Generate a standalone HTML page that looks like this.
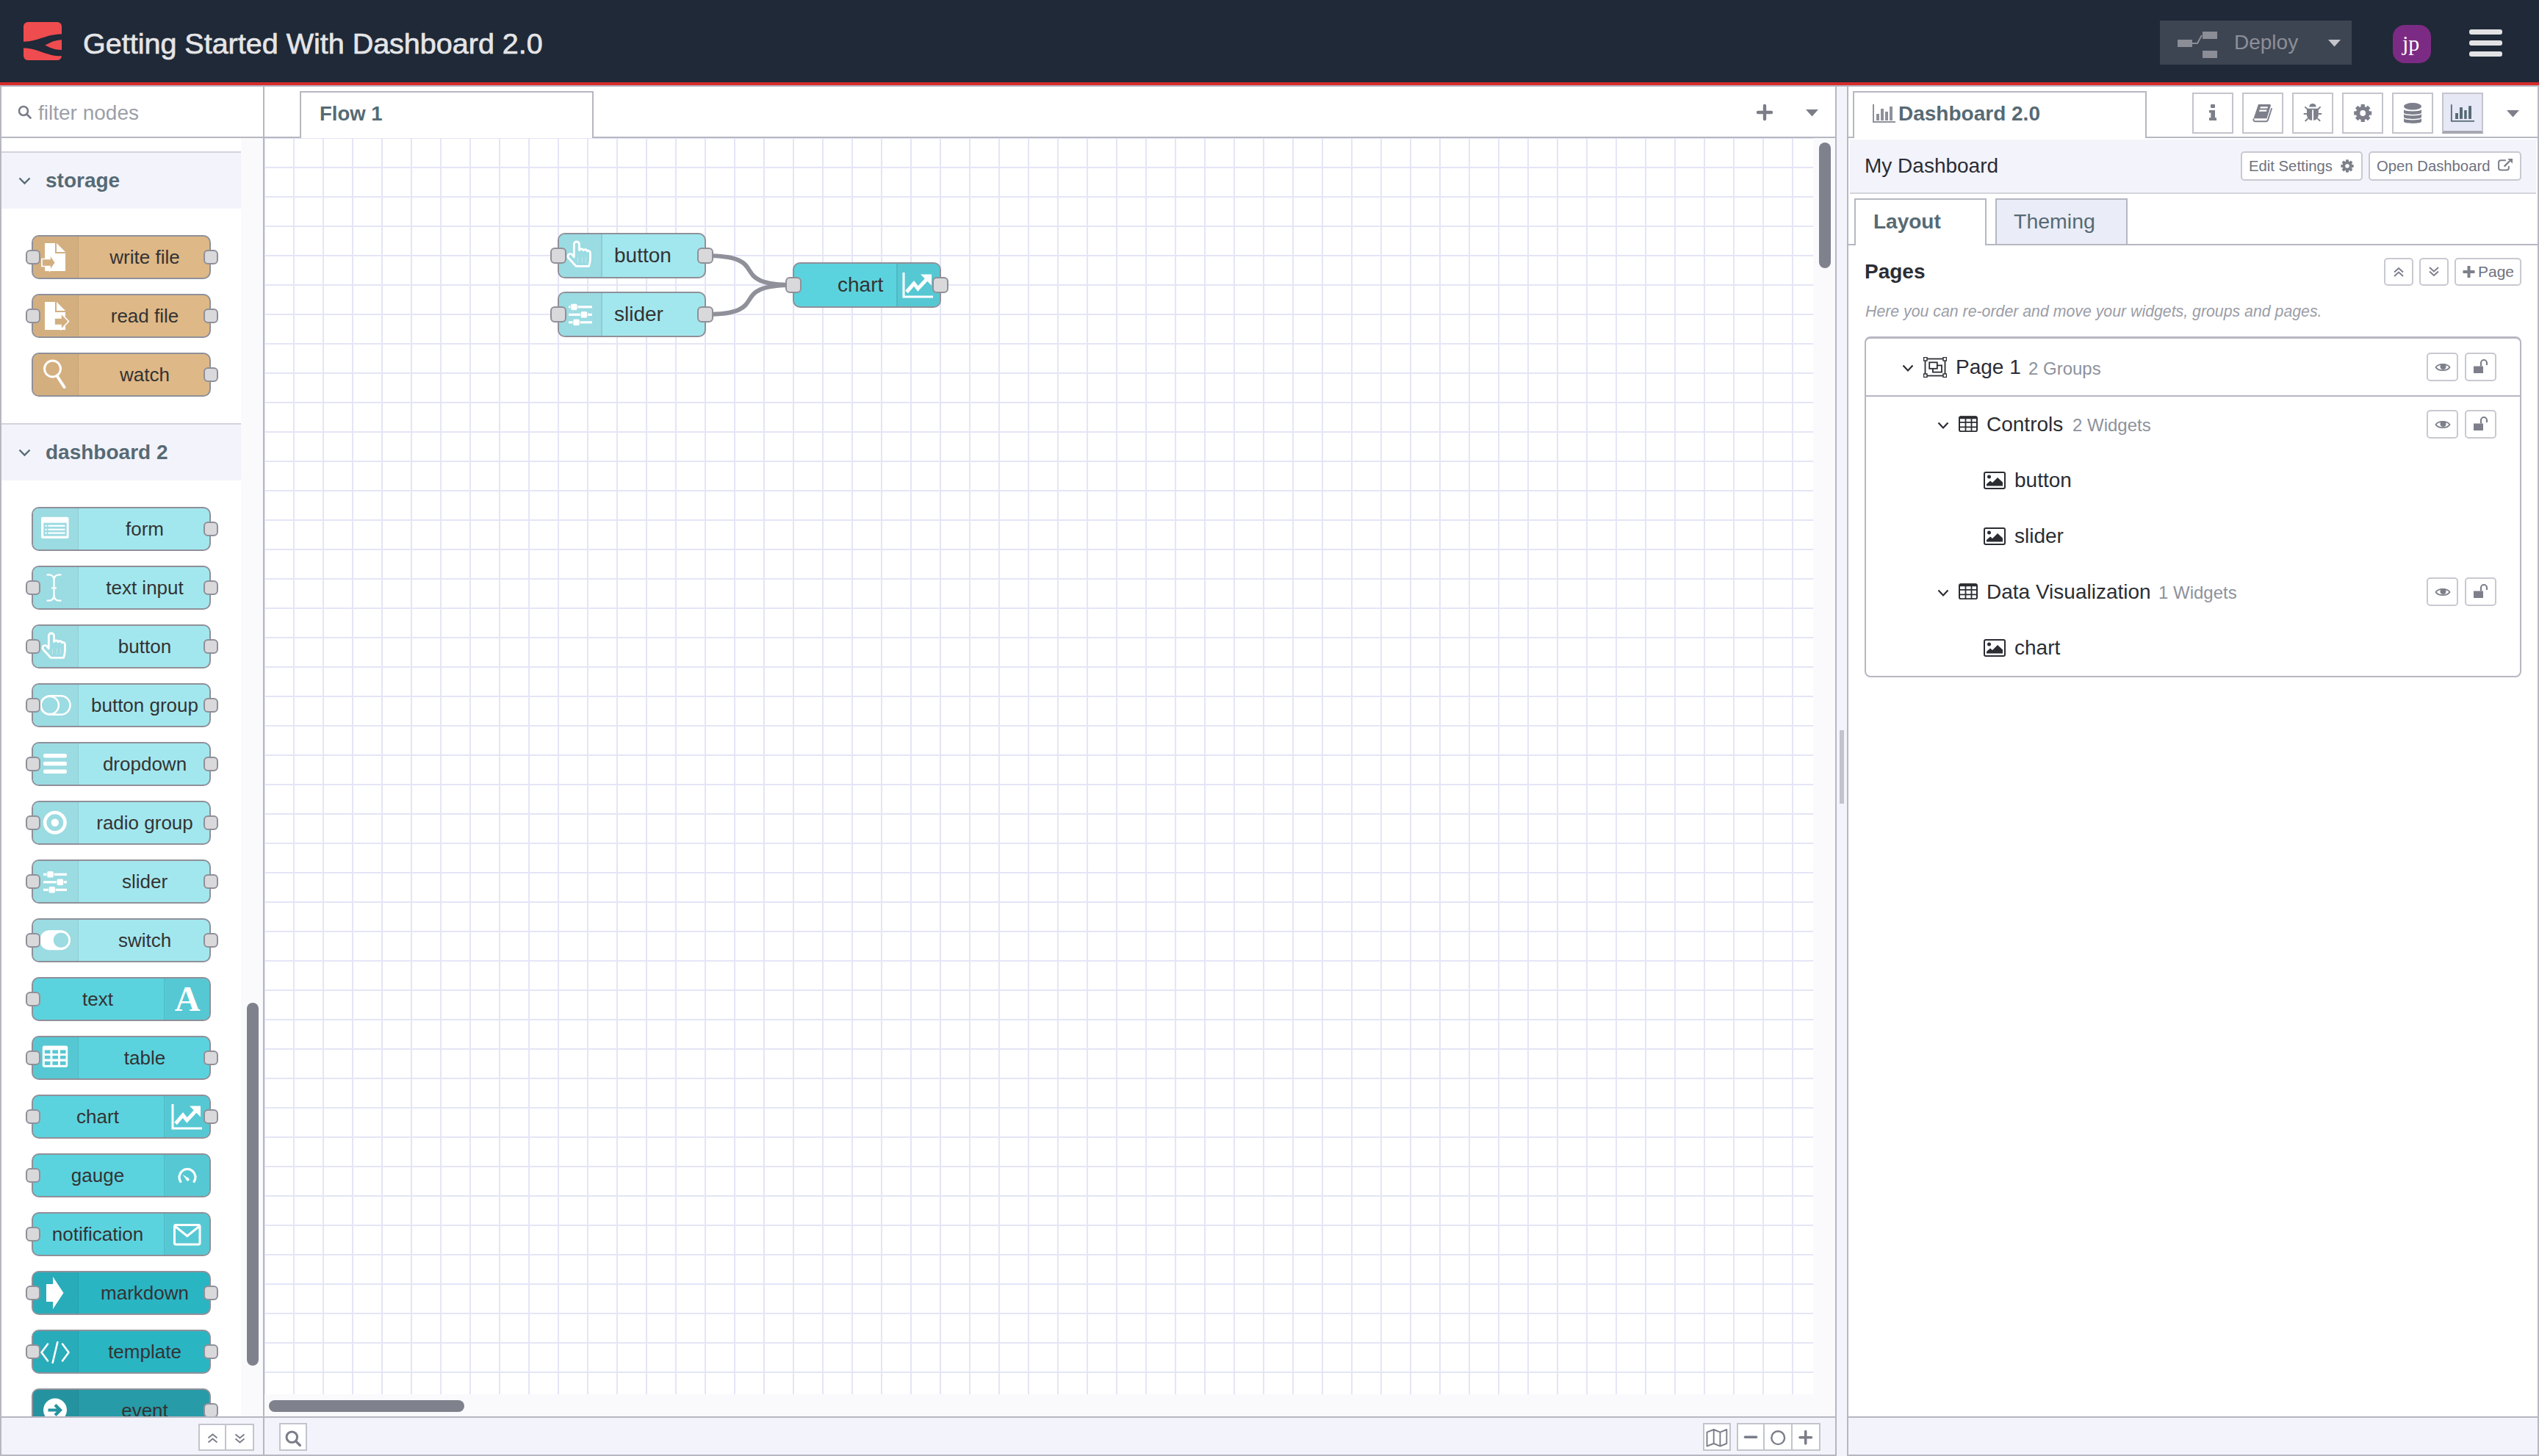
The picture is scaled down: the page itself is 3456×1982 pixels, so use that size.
<!DOCTYPE html><html><head><meta charset="utf-8"><style>html,body{margin:0;padding:0;width:3456px;height:1982px;overflow:hidden;background:#fff}body{font-family:"Liberation Sans",sans-serif}</style></head><body><div style="position:absolute;left:0;top:0;width:3456px;height:1982px;overflow:hidden;background:#fff">
<div style="position:absolute;left:0px;top:0px;width:3456px;height:112px;background:#1f2937;"></div>
<div style="position:absolute;left:0px;top:112px;width:3456px;height:4px;background:#d62c2c;"></div>
<div style="position:absolute;left:0px;top:116px;width:3456px;height:2px;background:#b6b7c1;"></div>
<svg style="position:absolute;left:32px;top:30px;" width="52" height="52" viewBox="0 0 52 52"><rect x="0" y="0" width="52" height="52" rx="6" fill="#ef4c4f"/><path d="M0 26.7C20 26.7 30 16.5 52 16.5V24.2C43 24.2 36 28 29.4 31.4C36 35 43 37.9 52 37.9V46.3C30 46.3 20 35.4 0 35.4Z" fill="#1f2937"/></svg>
<div style="position:absolute;left:113px;top:39.56px;font-family:'Liberation Sans', sans-serif;font-size:39.5px;line-height:39.5px;color:#e5e5e7;font-weight:normal;font-style:normal;white-space:nowrap;-webkit-text-stroke:0.7px #e5e5e7;">Getting Started With Dashboard 2.0</div>
<div style="position:absolute;left:2940px;top:28px;width:261px;height:60px;background:#3d4552;"></div>
<svg style="position:absolute;left:2964px;top:43px;" width="56" height="38" viewBox="0 0 56 38"><rect x="0" y="11" width="20" height="10" fill="#8b8d97"/><rect x="34" y="0" width="20" height="10" fill="#8b8d97"/><rect x="34" y="26" width="20" height="10" fill="#8b8d97"/><path d="M20 16L27 16L33 5" fill="none" stroke="#8b8d97" stroke-width="2"/></svg>
<div style="position:absolute;left:3041px;top:44.29px;font-family:'Liberation Sans', sans-serif;font-size:28px;line-height:28px;color:#8d8f99;font-weight:normal;font-style:normal;white-space:nowrap;">Deploy</div>
<svg style="position:absolute;left:3169px;top:54px;" width="17" height="10" viewBox="0 0 17 10"><path d="M0 0H17L8.5 9.5Z" fill="#c3c4cc"/></svg>
<div style="position:absolute;left:3257px;top:34px;width:52px;height:52px;background:#7c2b84;border-radius:16px;"></div>
<div style="position:absolute;left:3270px;top:44.20px;font-family:'Liberation Serif', serif;font-size:30px;line-height:30px;color:#fff;font-weight:normal;font-style:normal;white-space:nowrap;">jp</div>
<div style="position:absolute;left:3361px;top:40px;width:45px;height:7px;background:#e2e2e4;border-radius:3px;"></div>
<div style="position:absolute;left:3361px;top:55px;width:45px;height:7px;background:#e2e2e4;border-radius:3px;"></div>
<div style="position:absolute;left:3361px;top:70px;width:45px;height:7px;background:#e2e2e4;border-radius:3px;"></div>
<div style="position:absolute;left:0px;top:118px;width:2px;height:1864px;background:#b6b7c1;"></div>
<div style="position:absolute;left:2px;top:118px;width:356px;height:68px;background:#fff;"></div>
<div style="position:absolute;left:2px;top:186px;width:356px;height:2px;background:#b6b7c1;"></div>
<svg style="position:absolute;left:24px;top:143px;" width="20" height="20" viewBox="0 0 20 20"><circle cx="8" cy="8" r="6" fill="none" stroke="#7b7e89" stroke-width="2.6"/><path d="M12.5 12.5L17.5 17.5" stroke="#7b7e89" stroke-width="2.8" stroke-linecap="round"/></svg>
<div style="position:absolute;left:52px;top:140.29px;font-family:'Liberation Sans', sans-serif;font-size:28px;line-height:28px;color:#9d9fa8;font-weight:normal;font-style:normal;white-space:nowrap;">filter nodes</div>
<div style="position:absolute;left:358px;top:118px;width:2px;height:1864px;background:#b6b7c1;"></div>
<div style="position:absolute;left:2px;top:188px;width:356px;height:1740px;overflow:hidden;background:#fff">
<div style="position:absolute;left:-2px;top:-188px;width:360px;height:1928px">
<div style="position:absolute;left:328px;top:188px;width:30px;height:1740px;background:#fafafc;"></div>
<div style="position:absolute;left:336px;top:1365px;width:16px;height:494px;background:#7f818c;border-radius:8px;"></div>
<div style="position:absolute;left:2px;top:206px;width:326px;height:2px;background:#d3d4db;"></div>
<div style="position:absolute;left:2px;top:208px;width:326px;height:76px;background:#f3f3fb;"></div>
<svg style="position:absolute;left:25px;top:241px;" width="17" height="11" viewBox="0 0 17 11"><path d="M1.5 1.5L8.5 8.5L15.5 1.5" fill="none" stroke="#566a74" stroke-width="2.4"/></svg>
<div style="position:absolute;left:62px;top:232.09px;font-family:'Liberation Sans', sans-serif;font-size:28px;line-height:28px;color:#566a74;font-weight:bold;font-style:normal;white-space:nowrap;">storage</div>
<div style="position:absolute;left:2px;top:576px;width:326px;height:2px;background:#d3d4db;"></div>
<div style="position:absolute;left:2px;top:578px;width:326px;height:76px;background:#f3f3fb;"></div>
<svg style="position:absolute;left:25px;top:611px;" width="17" height="11" viewBox="0 0 17 11"><path d="M1.5 1.5L8.5 8.5L15.5 1.5" fill="none" stroke="#566a74" stroke-width="2.4"/></svg>
<div style="position:absolute;left:62px;top:602.09px;font-family:'Liberation Sans', sans-serif;font-size:28px;line-height:28px;color:#566a74;font-weight:bold;font-style:normal;white-space:nowrap;">dashboard 2</div>
<div style="position:absolute;left:43px;top:320px;width:244px;height:60px;box-sizing:border-box;border:2px solid #8f9099;border-radius:10px;background:#deb887;overflow:hidden"><div style="position:absolute;top:0;left:0;width:62px;height:56px;background:#d3af80;border-right:1px dotted rgba(0,0,0,0.12);box-sizing:border-box"></div></div>
<svg style="position:absolute;left:43px;top:320px;" width="64" height="60" viewBox="0 0 64 60"><path d="M18 11H32V25H46V49H18Z" fill="#ffffff"/><path d="M34 11L46 23H34Z" fill="#ffffff"/><path d="M14 32.5H25V26.5L32.5 37.5L25 48.5V42.5H14Z" fill="#d3af80" stroke="#ffffff" stroke-width="1.6"/></svg>
<div style="position:absolute;left:-3.00px;width:400px;text-align:center;top:336.69px;font-family:'Liberation Sans', sans-serif;font-size:26px;line-height:26px;color:#333;font-weight:normal;white-space:nowrap">write file</div>
<div style="position:absolute;left:35px;top:340px;width:20px;height:20px;box-sizing:border-box;border:2px solid #8f9099;border-radius:6px;background:#d9d9dc;"></div>
<div style="position:absolute;left:277px;top:340px;width:20px;height:20px;box-sizing:border-box;border:2px solid #8f9099;border-radius:6px;background:#d9d9dc;"></div>
<div style="position:absolute;left:43px;top:400px;width:244px;height:60px;box-sizing:border-box;border:2px solid #8f9099;border-radius:10px;background:#deb887;overflow:hidden"><div style="position:absolute;top:0;left:0;width:62px;height:56px;background:#d3af80;border-right:1px dotted rgba(0,0,0,0.12);box-sizing:border-box"></div></div>
<svg style="position:absolute;left:43px;top:400px;" width="64" height="60" viewBox="0 0 64 60"><path d="M18 11H32V25H46V49H18Z" fill="#ffffff"/><path d="M34 11L46 23H34Z" fill="#ffffff"/><path d="M31 33H40V26.5L50.5 37.5L40 48.5V42.5H31Z" fill="#d3af80" stroke="#ffffff" stroke-width="1.6"/></svg>
<div style="position:absolute;left:-3.00px;width:400px;text-align:center;top:416.69px;font-family:'Liberation Sans', sans-serif;font-size:26px;line-height:26px;color:#333;font-weight:normal;white-space:nowrap">read file</div>
<div style="position:absolute;left:35px;top:420px;width:20px;height:20px;box-sizing:border-box;border:2px solid #8f9099;border-radius:6px;background:#d9d9dc;"></div>
<div style="position:absolute;left:277px;top:420px;width:20px;height:20px;box-sizing:border-box;border:2px solid #8f9099;border-radius:6px;background:#d9d9dc;"></div>
<div style="position:absolute;left:43px;top:480px;width:244px;height:60px;box-sizing:border-box;border:2px solid #8f9099;border-radius:10px;background:#deb887;overflow:hidden"><div style="position:absolute;top:0;left:0;width:62px;height:56px;background:#d3af80;border-right:1px dotted rgba(0,0,0,0.12);box-sizing:border-box"></div></div>
<svg style="position:absolute;left:43px;top:480px;" width="64" height="60" viewBox="0 0 64 60"><circle cx="28.5" cy="22" r="11" fill="none" stroke="#ffffff" stroke-width="3"/><path d="M34.5 31.5L44.5 47" stroke="#ffffff" stroke-width="4" stroke-linecap="round"/></svg>
<div style="position:absolute;left:-3.00px;width:400px;text-align:center;top:496.69px;font-family:'Liberation Sans', sans-serif;font-size:26px;line-height:26px;color:#333;font-weight:normal;white-space:nowrap">watch</div>
<div style="position:absolute;left:277px;top:500px;width:20px;height:20px;box-sizing:border-box;border:2px solid #8f9099;border-radius:6px;background:#d9d9dc;"></div>
<div style="position:absolute;left:43px;top:690px;width:244px;height:60px;box-sizing:border-box;border:2px solid #8f9099;border-radius:10px;background:#a3e7ee;overflow:hidden"><div style="position:absolute;top:0;left:0;width:62px;height:56px;background:#9bdbe2;border-right:1px dotted rgba(0,0,0,0.12);box-sizing:border-box"></div></div>
<svg style="position:absolute;left:43px;top:690px;" width="64" height="60" viewBox="0 0 64 60"><rect x="13" y="13.7" width="37.6" height="29.2" rx="2.5" fill="#ffffff"/><rect x="16.3" y="21.7" width="31.4" height="18" fill="#9bdbe2"/><rect x="22.5" y="24.7" width="23" height="2.2" fill="#ffffff"/><rect x="18.5" y="24.7" width="2.2" height="2.2" fill="#ffffff"/><rect x="22.5" y="29.7" width="23" height="2.2" fill="#ffffff"/><rect x="18.5" y="29.7" width="2.2" height="2.2" fill="#ffffff"/><rect x="22.5" y="34.5" width="23" height="2.2" fill="#ffffff"/><rect x="18.5" y="34.5" width="2.2" height="2.2" fill="#ffffff"/></svg>
<div style="position:absolute;left:-3.00px;width:400px;text-align:center;top:706.69px;font-family:'Liberation Sans', sans-serif;font-size:26px;line-height:26px;color:#333;font-weight:normal;white-space:nowrap">form</div>
<div style="position:absolute;left:277px;top:710px;width:20px;height:20px;box-sizing:border-box;border:2px solid #8f9099;border-radius:6px;background:#d9d9dc;"></div>
<div style="position:absolute;left:43px;top:770px;width:244px;height:60px;box-sizing:border-box;border:2px solid #8f9099;border-radius:10px;background:#a3e7ee;overflow:hidden"><div style="position:absolute;top:0;left:0;width:62px;height:56px;background:#9bdbe2;border-right:1px dotted rgba(0,0,0,0.12);box-sizing:border-box"></div></div>
<svg style="position:absolute;left:43px;top:770px;" width="64" height="60" viewBox="0 0 64 60"><path d="M20.5 12.5C27 11.5 30.5 14 30.5 20V40C30.5 46 27 48.5 20.5 47.5M40.5 12.5C34 11.5 30.5 14 30.5 20V40C30.5 46 34 48.5 40.5 47.5M27 30.5H34" fill="none" stroke="#ffffff" stroke-width="2.2"/></svg>
<div style="position:absolute;left:-3.00px;width:400px;text-align:center;top:786.69px;font-family:'Liberation Sans', sans-serif;font-size:26px;line-height:26px;color:#333;font-weight:normal;white-space:nowrap">text input</div>
<div style="position:absolute;left:35px;top:790px;width:20px;height:20px;box-sizing:border-box;border:2px solid #8f9099;border-radius:6px;background:#d9d9dc;"></div>
<div style="position:absolute;left:277px;top:790px;width:20px;height:20px;box-sizing:border-box;border:2px solid #8f9099;border-radius:6px;background:#d9d9dc;"></div>
<div style="position:absolute;left:43px;top:850px;width:244px;height:60px;box-sizing:border-box;border:2px solid #8f9099;border-radius:10px;background:#a3e7ee;overflow:hidden"><div style="position:absolute;top:0;left:0;width:62px;height:56px;background:#9bdbe2;border-right:1px dotted rgba(0,0,0,0.12);box-sizing:border-box"></div></div>
<svg style="position:absolute;left:43px;top:850px;" width="64" height="60" viewBox="0 0 64 60"><g transform="translate(0,0)"><path d="M26 45.3L15.9 34.3A3.3 3.3 0 0 1 20.8 29.6L23.3 32.8V15.6A3.6 3.6 0 0 1 30.5 15.6V23.6C31.5 21.4 35.4 21.4 36.1 24C37 22 40.6 22.1 41.3 25C42.2 23.6 45.5 24.2 45.5 27.5V35C45.5 39 44.6 42.2 43.6 45.3Z" fill="none" stroke="#ffffff" stroke-width="2.8" stroke-linejoin="round"/><path d="M28.4 33V40.5M34.4 33V40.5M39.3 33V40.5" stroke="#ffffff" stroke-opacity="0.4" stroke-width="1"/></g></svg>
<div style="position:absolute;left:-3.00px;width:400px;text-align:center;top:866.69px;font-family:'Liberation Sans', sans-serif;font-size:26px;line-height:26px;color:#333;font-weight:normal;white-space:nowrap">button</div>
<div style="position:absolute;left:35px;top:870px;width:20px;height:20px;box-sizing:border-box;border:2px solid #8f9099;border-radius:6px;background:#d9d9dc;"></div>
<div style="position:absolute;left:277px;top:870px;width:20px;height:20px;box-sizing:border-box;border:2px solid #8f9099;border-radius:6px;background:#d9d9dc;"></div>
<div style="position:absolute;left:43px;top:930px;width:244px;height:60px;box-sizing:border-box;border:2px solid #8f9099;border-radius:10px;background:#a3e7ee;overflow:hidden"><div style="position:absolute;top:0;left:0;width:62px;height:56px;background:#9bdbe2;border-right:1px dotted rgba(0,0,0,0.12);box-sizing:border-box"></div></div>
<svg style="position:absolute;left:43px;top:930px;" width="64" height="60" viewBox="0 0 64 60"><rect x="12.5" y="17.2" width="40" height="25.6" rx="12.8" fill="none" stroke="#ffffff" stroke-width="2.5"/><circle cx="24.8" cy="30" r="12.1" fill="none" stroke="#ffffff" stroke-width="2.5"/></svg>
<div style="position:absolute;left:-3.00px;width:400px;text-align:center;top:946.69px;font-family:'Liberation Sans', sans-serif;font-size:26px;line-height:26px;color:#333;font-weight:normal;white-space:nowrap">button group</div>
<div style="position:absolute;left:35px;top:950px;width:20px;height:20px;box-sizing:border-box;border:2px solid #8f9099;border-radius:6px;background:#d9d9dc;"></div>
<div style="position:absolute;left:277px;top:950px;width:20px;height:20px;box-sizing:border-box;border:2px solid #8f9099;border-radius:6px;background:#d9d9dc;"></div>
<div style="position:absolute;left:43px;top:1010px;width:244px;height:60px;box-sizing:border-box;border:2px solid #8f9099;border-radius:10px;background:#a3e7ee;overflow:hidden"><div style="position:absolute;top:0;left:0;width:62px;height:56px;background:#9bdbe2;border-right:1px dotted rgba(0,0,0,0.12);box-sizing:border-box"></div></div>
<svg style="position:absolute;left:43px;top:1010px;" width="64" height="60" viewBox="0 0 64 60"><rect x="16" y="16" width="32" height="5.5" rx="2" fill="#ffffff"/><rect x="16" y="26.7" width="32" height="5.5" rx="2" fill="#ffffff"/><rect x="16" y="37.4" width="32" height="5.5" rx="2" fill="#ffffff"/></svg>
<div style="position:absolute;left:-3.00px;width:400px;text-align:center;top:1026.69px;font-family:'Liberation Sans', sans-serif;font-size:26px;line-height:26px;color:#333;font-weight:normal;white-space:nowrap">dropdown</div>
<div style="position:absolute;left:35px;top:1030px;width:20px;height:20px;box-sizing:border-box;border:2px solid #8f9099;border-radius:6px;background:#d9d9dc;"></div>
<div style="position:absolute;left:277px;top:1030px;width:20px;height:20px;box-sizing:border-box;border:2px solid #8f9099;border-radius:6px;background:#d9d9dc;"></div>
<div style="position:absolute;left:43px;top:1090px;width:244px;height:60px;box-sizing:border-box;border:2px solid #8f9099;border-radius:10px;background:#a3e7ee;overflow:hidden"><div style="position:absolute;top:0;left:0;width:62px;height:56px;background:#9bdbe2;border-right:1px dotted rgba(0,0,0,0.12);box-sizing:border-box"></div></div>
<svg style="position:absolute;left:43px;top:1090px;" width="64" height="60" viewBox="0 0 64 60"><circle cx="31.8" cy="29.7" r="13.7" fill="none" stroke="#ffffff" stroke-width="4.6"/><circle cx="31.8" cy="29.7" r="5.2" fill="#ffffff"/></svg>
<div style="position:absolute;left:-3.00px;width:400px;text-align:center;top:1106.69px;font-family:'Liberation Sans', sans-serif;font-size:26px;line-height:26px;color:#333;font-weight:normal;white-space:nowrap">radio group</div>
<div style="position:absolute;left:35px;top:1110px;width:20px;height:20px;box-sizing:border-box;border:2px solid #8f9099;border-radius:6px;background:#d9d9dc;"></div>
<div style="position:absolute;left:277px;top:1110px;width:20px;height:20px;box-sizing:border-box;border:2px solid #8f9099;border-radius:6px;background:#d9d9dc;"></div>
<div style="position:absolute;left:43px;top:1170px;width:244px;height:60px;box-sizing:border-box;border:2px solid #8f9099;border-radius:10px;background:#a3e7ee;overflow:hidden"><div style="position:absolute;top:0;left:0;width:62px;height:56px;background:#9bdbe2;border-right:1px dotted rgba(0,0,0,0.12);box-sizing:border-box"></div></div>
<svg style="position:absolute;left:43px;top:1170px;" width="64" height="60" viewBox="0 0 64 60"><g transform="translate(0,0)"><rect x="16" y="18.7" width="32" height="3.2" fill="#ffffff"/><rect x="20.9" y="15.700000000000001" width="9.2" height="9.2" rx="2" fill="#ffffff" stroke="#9bdbe2" stroke-width="0.8"/><rect x="16" y="29.2" width="32" height="3.2" fill="#ffffff"/><rect x="34.199999999999996" y="26.200000000000003" width="9.2" height="9.2" rx="2" fill="#ffffff" stroke="#9bdbe2" stroke-width="0.8"/><rect x="16" y="39.699999999999996" width="32" height="3.2" fill="#ffffff"/><rect x="23.200000000000003" y="36.699999999999996" width="9.2" height="9.2" rx="2" fill="#ffffff" stroke="#9bdbe2" stroke-width="0.8"/></g></svg>
<div style="position:absolute;left:-3.00px;width:400px;text-align:center;top:1186.69px;font-family:'Liberation Sans', sans-serif;font-size:26px;line-height:26px;color:#333;font-weight:normal;white-space:nowrap">slider</div>
<div style="position:absolute;left:35px;top:1190px;width:20px;height:20px;box-sizing:border-box;border:2px solid #8f9099;border-radius:6px;background:#d9d9dc;"></div>
<div style="position:absolute;left:277px;top:1190px;width:20px;height:20px;box-sizing:border-box;border:2px solid #8f9099;border-radius:6px;background:#d9d9dc;"></div>
<div style="position:absolute;left:43px;top:1250px;width:244px;height:60px;box-sizing:border-box;border:2px solid #8f9099;border-radius:10px;background:#a3e7ee;overflow:hidden"><div style="position:absolute;top:0;left:0;width:62px;height:56px;background:#9bdbe2;border-right:1px dotted rgba(0,0,0,0.12);box-sizing:border-box"></div></div>
<svg style="position:absolute;left:43px;top:1250px;" width="64" height="60" viewBox="0 0 64 60"><rect x="11" y="16.2" width="42" height="27" rx="13.5" fill="#ffffff"/><circle cx="40" cy="29.7" r="10.3" fill="#9bdbe2"/></svg>
<div style="position:absolute;left:-3.00px;width:400px;text-align:center;top:1266.69px;font-family:'Liberation Sans', sans-serif;font-size:26px;line-height:26px;color:#333;font-weight:normal;white-space:nowrap">switch</div>
<div style="position:absolute;left:35px;top:1270px;width:20px;height:20px;box-sizing:border-box;border:2px solid #8f9099;border-radius:6px;background:#d9d9dc;"></div>
<div style="position:absolute;left:277px;top:1270px;width:20px;height:20px;box-sizing:border-box;border:2px solid #8f9099;border-radius:6px;background:#d9d9dc;"></div>
<div style="position:absolute;left:43px;top:1330px;width:244px;height:60px;box-sizing:border-box;border:2px solid #8f9099;border-radius:10px;background:#5bd3de;overflow:hidden"><div style="position:absolute;top:0;left:178px;width:62px;height:56px;background:#56c8d3;border-left:1px dotted rgba(0,0,0,0.12);box-sizing:border-box"></div></div>
<svg style="position:absolute;left:223px;top:1330px;" width="64" height="60" viewBox="0 0 64 60"><text x="32" y="46" text-anchor="middle" font-family="Liberation Serif" font-weight="bold" font-size="48" fill="#ffffff">A</text></svg>
<div style="position:absolute;left:-67.00px;width:400px;text-align:center;top:1346.69px;font-family:'Liberation Sans', sans-serif;font-size:26px;line-height:26px;color:#333;font-weight:normal;white-space:nowrap">text</div>
<div style="position:absolute;left:35px;top:1350px;width:20px;height:20px;box-sizing:border-box;border:2px solid #8f9099;border-radius:6px;background:#d9d9dc;"></div>
<div style="position:absolute;left:43px;top:1410px;width:244px;height:60px;box-sizing:border-box;border:2px solid #8f9099;border-radius:10px;background:#5bd3de;overflow:hidden"><div style="position:absolute;top:0;left:0;width:62px;height:56px;background:#56c8d3;border-right:1px dotted rgba(0,0,0,0.12);box-sizing:border-box"></div></div>
<svg style="position:absolute;left:43px;top:1410px;" width="64" height="60" viewBox="0 0 64 60"><rect x="14.8" y="13.6" width="34.4" height="29.2" rx="2.5" fill="#ffffff"/><rect x="17.8" y="19.4" width="7.599999999999998" height="4.800000000000001" fill="#56c8d3"/><rect x="17.8" y="27" width="7.599999999999998" height="4.600000000000001" fill="#56c8d3"/><rect x="17.8" y="34.8" width="7.599999999999998" height="5.0" fill="#56c8d3"/><rect x="28.4" y="19.4" width="7.600000000000001" height="4.800000000000001" fill="#56c8d3"/><rect x="28.4" y="27" width="7.600000000000001" height="4.600000000000001" fill="#56c8d3"/><rect x="28.4" y="34.8" width="7.600000000000001" height="5.0" fill="#56c8d3"/><rect x="39" y="19.4" width="7.5" height="4.800000000000001" fill="#56c8d3"/><rect x="39" y="27" width="7.5" height="4.600000000000001" fill="#56c8d3"/><rect x="39" y="34.8" width="7.5" height="5.0" fill="#56c8d3"/></svg>
<div style="position:absolute;left:-3.00px;width:400px;text-align:center;top:1426.69px;font-family:'Liberation Sans', sans-serif;font-size:26px;line-height:26px;color:#333;font-weight:normal;white-space:nowrap">table</div>
<div style="position:absolute;left:35px;top:1430px;width:20px;height:20px;box-sizing:border-box;border:2px solid #8f9099;border-radius:6px;background:#d9d9dc;"></div>
<div style="position:absolute;left:277px;top:1430px;width:20px;height:20px;box-sizing:border-box;border:2px solid #8f9099;border-radius:6px;background:#d9d9dc;"></div>
<div style="position:absolute;left:43px;top:1490px;width:244px;height:60px;box-sizing:border-box;border:2px solid #8f9099;border-radius:10px;background:#5bd3de;overflow:hidden"><div style="position:absolute;top:0;left:178px;width:62px;height:56px;background:#56c8d3;border-left:1px dotted rgba(0,0,0,0.12);box-sizing:border-box"></div></div>
<svg style="position:absolute;left:223px;top:1490px;" width="64" height="60" viewBox="0 0 64 60"><g transform="translate(0,0)"><path d="M12 13V46H52" fill="none" stroke="#ffffff" stroke-width="3"/><path d="M16 39.5L26 28L31.5 35L44 21.5" fill="none" stroke="#ffffff" stroke-width="5"/><path d="M35 15.5H50V30.5Z" fill="#ffffff"/></g></svg>
<div style="position:absolute;left:-67.00px;width:400px;text-align:center;top:1506.69px;font-family:'Liberation Sans', sans-serif;font-size:26px;line-height:26px;color:#333;font-weight:normal;white-space:nowrap">chart</div>
<div style="position:absolute;left:35px;top:1510px;width:20px;height:20px;box-sizing:border-box;border:2px solid #8f9099;border-radius:6px;background:#d9d9dc;"></div>
<div style="position:absolute;left:277px;top:1510px;width:20px;height:20px;box-sizing:border-box;border:2px solid #8f9099;border-radius:6px;background:#d9d9dc;"></div>
<div style="position:absolute;left:43px;top:1570px;width:244px;height:60px;box-sizing:border-box;border:2px solid #8f9099;border-radius:10px;background:#5bd3de;overflow:hidden"><div style="position:absolute;top:0;left:178px;width:62px;height:56px;background:#56c8d3;border-left:1px dotted rgba(0,0,0,0.12);box-sizing:border-box"></div></div>
<svg style="position:absolute;left:223px;top:1570px;" width="64" height="60" viewBox="0 0 64 60"><path d="M22.8 38.5A11 11 0 1 1 41.2 38.5" fill="none" stroke="#ffffff" stroke-width="3.2" stroke-linecap="round"/><path d="M25.5 28.8L34.3 34.3L31.8 37.6Z" fill="#ffffff"/><circle cx="32.6" cy="35.6" r="2.1" fill="#ffffff"/></svg>
<div style="position:absolute;left:-67.00px;width:400px;text-align:center;top:1586.69px;font-family:'Liberation Sans', sans-serif;font-size:26px;line-height:26px;color:#333;font-weight:normal;white-space:nowrap">gauge</div>
<div style="position:absolute;left:35px;top:1590px;width:20px;height:20px;box-sizing:border-box;border:2px solid #8f9099;border-radius:6px;background:#d9d9dc;"></div>
<div style="position:absolute;left:43px;top:1650px;width:244px;height:60px;box-sizing:border-box;border:2px solid #8f9099;border-radius:10px;background:#5bd3de;overflow:hidden"><div style="position:absolute;top:0;left:178px;width:62px;height:56px;background:#56c8d3;border-left:1px dotted rgba(0,0,0,0.12);box-sizing:border-box"></div></div>
<svg style="position:absolute;left:223px;top:1650px;" width="64" height="60" viewBox="0 0 64 60"><rect x="14.5" y="17.5" width="34.5" height="26.5" rx="2" fill="none" stroke="#ffffff" stroke-width="3"/><path d="M15.5 19.5L31.8 32.5L48 19.5" fill="none" stroke="#ffffff" stroke-width="3"/></svg>
<div style="position:absolute;left:-67.00px;width:400px;text-align:center;top:1666.69px;font-family:'Liberation Sans', sans-serif;font-size:26px;line-height:26px;color:#333;font-weight:normal;white-space:nowrap">notification</div>
<div style="position:absolute;left:35px;top:1670px;width:20px;height:20px;box-sizing:border-box;border:2px solid #8f9099;border-radius:6px;background:#d9d9dc;"></div>
<div style="position:absolute;left:43px;top:1730px;width:244px;height:60px;box-sizing:border-box;border:2px solid #8f9099;border-radius:10px;background:#2ab5c3;overflow:hidden"><div style="position:absolute;top:0;left:0;width:62px;height:56px;background:#28acb9;border-right:1px dotted rgba(0,0,0,0.12);box-sizing:border-box"></div></div>
<svg style="position:absolute;left:43px;top:1730px;" width="64" height="60" viewBox="0 0 64 60"><path d="M20 18H29V8L43.5 30L29 52V42H20Z" fill="#ffffff"/></svg>
<div style="position:absolute;left:-3.00px;width:400px;text-align:center;top:1746.69px;font-family:'Liberation Sans', sans-serif;font-size:26px;line-height:26px;color:#333;font-weight:normal;white-space:nowrap">markdown</div>
<div style="position:absolute;left:35px;top:1750px;width:20px;height:20px;box-sizing:border-box;border:2px solid #8f9099;border-radius:6px;background:#d9d9dc;"></div>
<div style="position:absolute;left:277px;top:1750px;width:20px;height:20px;box-sizing:border-box;border:2px solid #8f9099;border-radius:6px;background:#d9d9dc;"></div>
<div style="position:absolute;left:43px;top:1810px;width:244px;height:60px;box-sizing:border-box;border:2px solid #8f9099;border-radius:10px;background:#2ab5c3;overflow:hidden"><div style="position:absolute;top:0;left:0;width:62px;height:56px;background:#28acb9;border-right:1px dotted rgba(0,0,0,0.12);box-sizing:border-box"></div></div>
<svg style="position:absolute;left:43px;top:1810px;" width="64" height="60" viewBox="0 0 64 60"><path d="M22 19.5L13.5 31L22 42.5M42 19.5L50.5 31L42 42.5M35.3 17L28.7 45" fill="none" stroke="#ffffff" stroke-width="2.6" stroke-linecap="round" stroke-linejoin="round"/></svg>
<div style="position:absolute;left:-3.00px;width:400px;text-align:center;top:1826.69px;font-family:'Liberation Sans', sans-serif;font-size:26px;line-height:26px;color:#333;font-weight:normal;white-space:nowrap">template</div>
<div style="position:absolute;left:35px;top:1830px;width:20px;height:20px;box-sizing:border-box;border:2px solid #8f9099;border-radius:6px;background:#d9d9dc;"></div>
<div style="position:absolute;left:277px;top:1830px;width:20px;height:20px;box-sizing:border-box;border:2px solid #8f9099;border-radius:6px;background:#d9d9dc;"></div>
<div style="position:absolute;left:43px;top:1890px;width:244px;height:60px;box-sizing:border-box;border:2px solid #8f9099;border-radius:10px;background:#279ba7;overflow:hidden"><div style="position:absolute;top:0;left:0;width:62px;height:56px;background:#25939f;border-right:1px dotted rgba(0,0,0,0.12);box-sizing:border-box"></div></div>
<svg style="position:absolute;left:43px;top:1890px;" width="64" height="60" viewBox="0 0 64 60"><circle cx="32" cy="29.5" r="16" fill="#ffffff"/><path d="M22.5 29.5H38M32 22.5L39 29.5L32 36.5" fill="none" stroke="#25939f" stroke-width="4.2" stroke-linejoin="miter"/></svg>
<div style="position:absolute;left:-3.00px;width:400px;text-align:center;top:1906.69px;font-family:'Liberation Sans', sans-serif;font-size:26px;line-height:26px;color:#333;font-weight:normal;white-space:nowrap">event</div>
<div style="position:absolute;left:277px;top:1910px;width:20px;height:20px;box-sizing:border-box;border:2px solid #8f9099;border-radius:6px;background:#d9d9dc;"></div>
</div></div>
<div style="position:absolute;left:2px;top:1928px;width:356px;height:2px;background:#b6b7c1;"></div>
<div style="position:absolute;left:2px;top:1930px;width:356px;height:50px;background:#f3f3fb;"></div>
<div style="position:absolute;left:0px;top:1980px;width:3456px;height:2px;background:#b6b7c1;"></div>
<div style="position:absolute;left:270px;top:1938px;width:76px;height:37px;box-sizing:border-box;border:2px solid #c3c4cc;background:#fff;"></div>
<div style="position:absolute;left:306px;top:1938px;width:2px;height:37px;background:#c3c4cc;"></div>
<svg style="position:absolute;left:282px;top:1948px;" width="16" height="20" viewBox="0 0 16 20"><path d="M1.5 9.5L7.5 4.5L13.5 9.5M1.5 15.5L7.5 10.5L13.5 15.5" fill="none" stroke="#7b7e89" stroke-width="1.9"/></svg>
<svg style="position:absolute;left:319px;top:1948px;" width="16" height="20" viewBox="0 0 16 20"><path d="M1.5 4.5L7.5 9.5L13.5 4.5M1.5 10.5L7.5 15.5L13.5 10.5" fill="none" stroke="#7b7e89" stroke-width="1.9"/></svg>
<div style="position:absolute;left:360px;top:118px;width:2138px;height:68px;background:#fff;"></div>
<div style="position:absolute;left:360px;top:186px;width:2138px;height:2px;background:#b6b7c1;"></div>
<div style="position:absolute;left:408px;top:124px;width:400px;height:64px;box-sizing:border-box;border:2px solid #b6b7c1;border-bottom:none;background:#fff;"></div>
<div style="position:absolute;left:435px;top:141.42px;font-family:'Liberation Sans', sans-serif;font-size:27.5px;line-height:27.5px;color:#566a74;font-weight:bold;font-style:normal;white-space:nowrap;">Flow 1</div>
<svg style="position:absolute;left:2390px;top:141px;" width="24" height="24" viewBox="0 0 24 24"><path d="M12 3V21M3 12H21" stroke="#7b7e89" stroke-width="4.4" stroke-linecap="round"/></svg>
<svg style="position:absolute;left:2458px;top:149px;" width="17" height="10" viewBox="0 0 17 10"><path d="M0 0H17L8.5 9.5Z" fill="#7b7e89"/></svg>
<div style="position:absolute;left:360px;top:188px;width:2108px;height:1710px;background-color:#fff;background-image:linear-gradient(to right,#e4e5f6 2px,transparent 2px),linear-gradient(to bottom,#e4e5f6 2px,transparent 2px);background-size:40px 40px;background-position:-1px -1px;"></div>
<div style="position:absolute;left:2468px;top:188px;width:30px;height:1740px;background:#fafafc;"></div>
<div style="position:absolute;left:360px;top:1898px;width:2108px;height:30px;background:#fafafc;"></div>
<div style="position:absolute;left:2476px;top:194px;width:16px;height:171px;background:#7f818c;border-radius:8px;"></div>
<div style="position:absolute;left:366px;top:1906px;width:266px;height:16px;background:#7f818c;border-radius:8px;"></div>
<div style="position:absolute;left:2498px;top:118px;width:2px;height:1864px;background:#b6b7c1;"></div>
<svg style="position:absolute;left:360px;top:188px;" width="2108" height="1710" viewBox="0 0 2108 1710"><path d="M600 160C694.8 160 625.2 200 720 200M600 240C694.8 240 625.2 200 720 200" fill="none" stroke="#8f9099" stroke-width="6"/></svg>
<div style="position:absolute;left:759px;top:317px;width:202px;height:62px;box-sizing:border-box;border:2px solid #8f9099;border-radius:10px;background:#a3e7ee;overflow:hidden"><div style="position:absolute;top:0;left:0;width:59px;height:58px;background:#9bdbe2;border-right:2px solid rgba(0,0,0,0.07);box-sizing:border-box"></div></div>
<svg style="position:absolute;left:760px;top:318px;" width="60" height="60" viewBox="0 0 60 60"><g transform="translate(-2,-1)"><path d="M26 45.3L15.9 34.3A3.3 3.3 0 0 1 20.8 29.6L23.3 32.8V15.6A3.6 3.6 0 0 1 30.5 15.6V23.6C31.5 21.4 35.4 21.4 36.1 24C37 22 40.6 22.1 41.3 25C42.2 23.6 45.5 24.2 45.5 27.5V35C45.5 39 44.6 42.2 43.6 45.3Z" fill="none" stroke="#ffffff" stroke-width="2.8" stroke-linejoin="round"/><path d="M28.4 33V40.5M34.4 33V40.5M39.3 33V40.5" stroke="#ffffff" stroke-opacity="0.4" stroke-width="1"/></g></svg>
<div style="position:absolute;left:836px;top:333.79px;font-family:'Liberation Sans', sans-serif;font-size:28px;line-height:28px;color:#333;font-weight:normal;font-style:normal;white-space:nowrap;">button</div>
<div style="position:absolute;left:749px;top:337px;width:22px;height:22px;box-sizing:border-box;border:2px solid #8f9099;border-radius:6px;background:#d9d9dc;"></div>
<div style="position:absolute;left:949px;top:337px;width:22px;height:22px;box-sizing:border-box;border:2px solid #8f9099;border-radius:6px;background:#d9d9dc;"></div>
<div style="position:absolute;left:759px;top:397px;width:202px;height:62px;box-sizing:border-box;border:2px solid #8f9099;border-radius:10px;background:#a3e7ee;overflow:hidden"><div style="position:absolute;top:0;left:0;width:59px;height:58px;background:#9bdbe2;border-right:2px solid rgba(0,0,0,0.07);box-sizing:border-box"></div></div>
<svg style="position:absolute;left:760px;top:398px;" width="60" height="60" viewBox="0 0 60 60"><g transform="translate(-2,-0.5)"><rect x="16" y="18.7" width="32" height="3.2" fill="#ffffff"/><rect x="18.799999999999997" y="15.700000000000001" width="9.2" height="9.2" rx="2" fill="#ffffff" stroke="#9bdbe2" stroke-width="0.8"/><rect x="16" y="29.2" width="32" height="3.2" fill="#ffffff"/><rect x="32.3" y="26.200000000000003" width="9.2" height="9.2" rx="2" fill="#ffffff" stroke="#9bdbe2" stroke-width="0.8"/><rect x="16" y="39.699999999999996" width="32" height="3.2" fill="#ffffff"/><rect x="21.9" y="36.699999999999996" width="9.2" height="9.2" rx="2" fill="#ffffff" stroke="#9bdbe2" stroke-width="0.8"/></g></svg>
<div style="position:absolute;left:836px;top:413.79px;font-family:'Liberation Sans', sans-serif;font-size:28px;line-height:28px;color:#333;font-weight:normal;font-style:normal;white-space:nowrap;">slider</div>
<div style="position:absolute;left:749px;top:417px;width:22px;height:22px;box-sizing:border-box;border:2px solid #8f9099;border-radius:6px;background:#d9d9dc;"></div>
<div style="position:absolute;left:949px;top:417px;width:22px;height:22px;box-sizing:border-box;border:2px solid #8f9099;border-radius:6px;background:#d9d9dc;"></div>
<div style="position:absolute;left:1079px;top:357px;width:202px;height:62px;box-sizing:border-box;border:2px solid #8f9099;border-radius:10px;background:#5bd3de;overflow:hidden"><div style="position:absolute;top:0;left:139px;width:59px;height:58px;background:#56c8d3;border-left:2px solid rgba(0,0,0,0.07);box-sizing:border-box"></div></div>
<svg style="position:absolute;left:1220px;top:358px;" width="60" height="60" viewBox="0 0 60 60"><g transform="translate(-2,0)"><path d="M12 13V46H52" fill="none" stroke="#ffffff" stroke-width="3"/><path d="M16 39.5L26 28L31.5 35L44 21.5" fill="none" stroke="#ffffff" stroke-width="5"/><path d="M35 15.5H50V30.5Z" fill="#ffffff"/></g></svg>
<div style="position:absolute;left:1140px;top:373.79px;font-family:'Liberation Sans', sans-serif;font-size:28px;line-height:28px;color:#333;font-weight:normal;font-style:normal;white-space:nowrap;">chart</div>
<div style="position:absolute;left:1069px;top:377px;width:22px;height:22px;box-sizing:border-box;border:2px solid #8f9099;border-radius:6px;background:#d9d9dc;"></div>
<div style="position:absolute;left:1269px;top:377px;width:22px;height:22px;box-sizing:border-box;border:2px solid #8f9099;border-radius:6px;background:#d9d9dc;"></div>
<div style="position:absolute;left:360px;top:1928px;width:2138px;height:2px;background:#b6b7c1;"></div>
<div style="position:absolute;left:360px;top:1930px;width:2138px;height:50px;background:#f3f3fb;"></div>
<div style="position:absolute;left:380px;top:1937px;width:38px;height:38px;box-sizing:border-box;border:2px solid #c3c4cc;background:#fff;"></div>
<svg style="position:absolute;left:380px;top:1937px;" width="38" height="38" viewBox="0 0 38 38"><circle cx="17.3" cy="19.3" r="7.3" fill="none" stroke="#7b7e89" stroke-width="3"/><path d="M22.8 25L28.3 30.5" stroke="#7b7e89" stroke-width="3.2" stroke-linecap="round"/></svg>
<div style="position:absolute;left:2318px;top:1937px;width:38px;height:38px;box-sizing:border-box;border:2px solid #c3c4cc;background:#fff;"></div>
<svg style="position:absolute;left:2318px;top:1937px;" width="38" height="38" viewBox="0 0 38 38"><path d="M5.5 12.6L14.7 9L23.4 12.6L32.3 9V28L23.4 31.6L14.7 28L5.5 31.6Z M14.7 9V28M23.4 12.6V31.6" fill="none" stroke="#7b7e89" stroke-width="1.9" stroke-linejoin="round"/></svg>
<div style="position:absolute;left:2364px;top:1937px;width:114px;height:38px;box-sizing:border-box;border:2px solid #c3c4cc;background:#fff;"></div>
<div style="position:absolute;left:2400px;top:1937px;width:2px;height:38px;background:#c3c4cc;"></div>
<div style="position:absolute;left:2438px;top:1937px;width:2px;height:38px;background:#c3c4cc;"></div>
<svg style="position:absolute;left:2364px;top:1937px;" width="114" height="38" viewBox="0 0 114 38"><path d="M11.5 19.3H26.5" stroke="#7b7e89" stroke-width="3.6" stroke-linecap="round"/><circle cx="56.2" cy="20.2" r="8.9" fill="none" stroke="#7b7e89" stroke-width="2.4"/><path d="M93.7 11.5V28M86 19.7H101.5" stroke="#7b7e89" stroke-width="3.6" stroke-linecap="round"/></svg>
<div style="position:absolute;left:2500px;top:118px;width:14px;height:1864px;background:#f3f3fb;"></div>
<div style="position:absolute;left:2504px;top:994px;width:6px;height:100px;background:#c2c3cc;"></div>
<div style="position:absolute;left:2514px;top:118px;width:2px;height:1864px;background:#b6b7c1;"></div>
<div style="position:absolute;left:2516px;top:118px;width:938px;height:68px;background:#fff;"></div>
<div style="position:absolute;left:2516px;top:186px;width:938px;height:2px;background:#b6b7c1;"></div>
<div style="position:absolute;left:3454px;top:118px;width:2px;height:1864px;background:#b6b7c1;"></div>
<div style="position:absolute;left:2522px;top:124px;width:400px;height:64px;box-sizing:border-box;border:2px solid #b6b7c1;border-bottom:none;background:#fff;"></div>
<svg style="position:absolute;left:2548px;top:142px;" width="34" height="26" viewBox="0 0 34 26"><path d="M2 0V24H32" fill="none" stroke="#8e909a" stroke-width="2"/><rect x="6" y="13" width="4" height="9" fill="#8e909a"/><rect x="12" y="6" width="4" height="16" fill="#8e909a"/><rect x="18" y="10" width="4" height="12" fill="#8e909a"/><rect x="24" y="3" width="4" height="19" fill="#8e909a"/></svg>
<div style="position:absolute;left:2584px;top:140.69px;font-family:'Liberation Sans', sans-serif;font-size:28px;line-height:28px;color:#566a74;font-weight:bold;font-style:normal;white-space:nowrap;">Dashboard 2.0</div>
<div style="position:absolute;left:2984px;top:126px;width:56px;height:56px;box-sizing:border-box;border:2px solid #c3c4cc;background:#fff;"></div>
<div style="position:absolute;left:3052px;top:126px;width:56px;height:56px;box-sizing:border-box;border:2px solid #c3c4cc;background:#fff;"></div>
<div style="position:absolute;left:3120px;top:126px;width:56px;height:56px;box-sizing:border-box;border:2px solid #c3c4cc;background:#fff;"></div>
<div style="position:absolute;left:3188px;top:126px;width:56px;height:56px;box-sizing:border-box;border:2px solid #c3c4cc;background:#fff;"></div>
<div style="position:absolute;left:3256px;top:126px;width:56px;height:56px;box-sizing:border-box;border:2px solid #c3c4cc;background:#fff;"></div>
<div style="position:absolute;left:3324px;top:126px;width:56px;height:56px;box-sizing:border-box;border:2px solid #c3c4cc;border-bottom:4px solid #a6a7b0;background:#e6e8f6;"></div>
<svg style="position:absolute;left:2984px;top:126px;" width="56" height="56" viewBox="0 0 56 56"><rect x="25" y="16" width="6" height="5" rx="1" fill="#7d808b"/><path d="M23 24H31V34.2H33V38H23V34.2H25.3V27.6H23Z" fill="#7d808b"/></svg>
<svg style="position:absolute;left:3052px;top:126px;" width="56" height="56" viewBox="0 0 56 56"><path d="M22 16H37.6C38.6 16 39.1 17 38.8 18L33.5 35.2H15.5Z" fill="#7d808b"/><path d="M15.8 35.5C14.8 37.3 15.5 39.3 17.8 39.3H32.5C33.8 39.3 34.5 38.6 34.9 37.6L40.2 21.3" fill="none" stroke="#7d808b" stroke-width="1.9"/><path d="M25 19.3H35L34.3 21.6H24.3Z M23.6 23.4H33.6L32.9 25.7H22.9Z" fill="#fff"/></svg>
<svg style="position:absolute;left:3120px;top:126px;" width="56" height="56" viewBox="0 0 56 56"><path d="M23.2 19.6A4.75 4.6 0 0 1 32.7 19.6Z" fill="#7d808b"/><path d="M20 21.7H35.8V30C35.8 35 32.5 38 27.9 38S20 35 20 30Z" fill="#7d808b"/><path d="M28.1 23.5V38.5" stroke="#fff" stroke-width="1.9"/><path d="M17.3 19.4L21.6 23.3M38.6 19.4L34.6 23.3M15.7 29H20.5M40.2 29H35.5M17.7 39L21.6 35.1M38.2 38.7L34.3 35.1" stroke="#7d808b" stroke-width="1.9"/></svg>
<svg style="position:absolute;left:3188px;top:126px;" width="56" height="56" viewBox="0 0 56 56"><rect x="25.6" y="16" width="5.2" height="5" fill="#7d808b" transform="rotate(0 28.2 28)"/><rect x="25.6" y="16" width="5.2" height="5" fill="#7d808b" transform="rotate(45 28.2 28)"/><rect x="25.6" y="16" width="5.2" height="5" fill="#7d808b" transform="rotate(90 28.2 28)"/><rect x="25.6" y="16" width="5.2" height="5" fill="#7d808b" transform="rotate(135 28.2 28)"/><rect x="25.6" y="16" width="5.2" height="5" fill="#7d808b" transform="rotate(180 28.2 28)"/><rect x="25.6" y="16" width="5.2" height="5" fill="#7d808b" transform="rotate(225 28.2 28)"/><rect x="25.6" y="16" width="5.2" height="5" fill="#7d808b" transform="rotate(270 28.2 28)"/><rect x="25.6" y="16" width="5.2" height="5" fill="#7d808b" transform="rotate(315 28.2 28)"/><circle cx="28.2" cy="28" r="9.3" fill="#7d808b"/><circle cx="28.2" cy="28" r="3.9" fill="#fff"/></svg>
<svg style="position:absolute;left:3256px;top:126px;" width="56" height="56" viewBox="0 0 56 56"><ellipse cx="28" cy="18.8" rx="12" ry="4.8" fill="#7d808b"/><path d="M16 23 C16 26.2 40 26.2 40 23 V27.6 C40 30.8 16 30.8 16 27.6Z" fill="#7d808b"/><path d="M16 29 C16 32.2 40 32.2 40 29 V33.6 C40 36.8 16 36.8 16 33.6Z" fill="#7d808b"/><path d="M16 35 C16 38.2 40 38.2 40 35 V39.6 C40 42.8 16 42.8 16 39.6Z" fill="#7d808b"/></svg>
<svg style="position:absolute;left:3324px;top:126px;" width="56" height="56" viewBox="0 0 56 56"><path d="M12.85 16.2V38.9H44" fill="none" stroke="#566a74" stroke-width="1.8"/><rect x="18.1" y="28" width="3.9" height="8" fill="#566a74"/><rect x="24" y="20.1" width="4" height="15.8" fill="#566a74"/><rect x="30.2" y="24" width="3.5" height="11.9" fill="#566a74"/><rect x="36.1" y="18.2" width="3.9" height="17.7" fill="#566a74"/></svg>
<svg style="position:absolute;left:3412px;top:150px;" width="17" height="10" viewBox="0 0 17 10"><path d="M0 0H17L8.5 9.5Z" fill="#7d808b"/></svg>
<div style="position:absolute;left:2518px;top:190px;width:934px;height:72px;background:#f3f3fb;"></div>
<div style="position:absolute;left:2518px;top:262px;width:934px;height:2px;background:#d3d4db;"></div>
<div style="position:absolute;left:2538px;top:211.99px;font-family:'Liberation Sans', sans-serif;font-size:28px;line-height:28px;color:#2b2d33;font-weight:normal;font-style:normal;white-space:nowrap;">My Dashboard</div>
<div style="position:absolute;left:3050px;top:206px;width:166px;height:40px;box-sizing:border-box;border:2px solid #c8c9d1;border-radius:5px;background:#fff;"></div>
<div style="position:absolute;left:3061px;top:215.81px;font-family:'Liberation Sans', sans-serif;font-size:20.3px;line-height:20.3px;color:#6f727d;font-weight:normal;font-style:normal;white-space:nowrap;">Edit Settings</div>
<svg style="position:absolute;left:3186px;top:217px;" width="18" height="18" viewBox="0 0 18 18"><rect x="7" y="0.3" width="4" height="4" rx="0.9" fill="#7d808b" transform="rotate(0 9 9)"/><rect x="7" y="0.3" width="4" height="4" rx="0.9" fill="#7d808b" transform="rotate(45 9 9)"/><rect x="7" y="0.3" width="4" height="4" rx="0.9" fill="#7d808b" transform="rotate(90 9 9)"/><rect x="7" y="0.3" width="4" height="4" rx="0.9" fill="#7d808b" transform="rotate(135 9 9)"/><rect x="7" y="0.3" width="4" height="4" rx="0.9" fill="#7d808b" transform="rotate(180 9 9)"/><rect x="7" y="0.3" width="4" height="4" rx="0.9" fill="#7d808b" transform="rotate(225 9 9)"/><rect x="7" y="0.3" width="4" height="4" rx="0.9" fill="#7d808b" transform="rotate(270 9 9)"/><rect x="7" y="0.3" width="4" height="4" rx="0.9" fill="#7d808b" transform="rotate(315 9 9)"/><circle cx="9" cy="9" r="6.5" fill="#7d808b"/><circle cx="9" cy="9" r="2.8" fill="#fff"/></svg>
<div style="position:absolute;left:3224px;top:206px;width:208px;height:40px;box-sizing:border-box;border:2px solid #c8c9d1;border-radius:5px;background:#fff;"></div>
<div style="position:absolute;left:3235px;top:215.81px;font-family:'Liberation Sans', sans-serif;font-size:20.3px;line-height:20.3px;color:#6f727d;font-weight:normal;font-style:normal;white-space:nowrap;">Open Dashboard</div>
<svg style="position:absolute;left:3399px;top:214px;" width="22" height="22" viewBox="0 0 22 22"><path d="M11.9 4.2H5.1Q2.1 4.2 2.1 7.2V14.5Q2.1 17.5 5.1 17.5H12.9Q15.9 17.5 15.9 14.5V12" fill="none" stroke="#7d808b" stroke-width="2"/><path d="M9.7 12.6L17.3 5" stroke="#7d808b" stroke-width="2.4"/><path d="M14.2 2H21V8.8Z" fill="#7d808b"/></svg>
<div style="position:absolute;left:2516px;top:332px;width:938px;height:2px;background:#b6b7c1;"></div>
<div style="position:absolute;left:2524px;top:270px;width:180px;height:64px;box-sizing:border-box;border:2px solid #b6b7c1;border-bottom:none;background:#fff;"></div>
<div style="position:absolute;left:2716px;top:270px;width:180px;height:62px;box-sizing:border-box;border:2px solid #b6b7c1;border-bottom:none;background:#eaecf7;"></div>
<div style="position:absolute;left:2550px;top:287.59px;font-family:'Liberation Sans', sans-serif;font-size:28px;line-height:28px;color:#566a74;font-weight:bold;font-style:normal;white-space:nowrap;">Layout</div>
<div style="position:absolute;left:2741px;top:287.17px;font-family:'Liberation Sans', sans-serif;font-size:28.5px;line-height:28.5px;color:#566a74;font-weight:normal;font-style:normal;white-space:nowrap;">Theming</div>
<div style="position:absolute;left:2538px;top:356.29px;font-family:'Liberation Sans', sans-serif;font-size:28px;line-height:28px;color:#2b2d33;font-weight:bold;font-style:normal;white-space:nowrap;">Pages</div>
<div style="position:absolute;left:3245px;top:351px;width:40px;height:38px;box-sizing:border-box;border:2px solid #c8c9d1;border-radius:5px;background:#fff;"></div>
<div style="position:absolute;left:3293px;top:351px;width:40px;height:38px;box-sizing:border-box;border:2px solid #c8c9d1;border-radius:5px;background:#fff;"></div>
<div style="position:absolute;left:3341px;top:351px;width:91px;height:38px;box-sizing:border-box;border:2px solid #c8c9d1;border-radius:5px;background:#fff;"></div>
<svg style="position:absolute;left:3245px;top:351px;" width="40" height="38" viewBox="0 0 40 38"><path d="M14 19.5L20 14L26 19.5M14 25L20 19.5L26 25" fill="none" stroke="#7d808b" stroke-width="2"/></svg>
<svg style="position:absolute;left:3293px;top:351px;" width="40" height="38" viewBox="0 0 40 38"><path d="M14 13L20 18.5L26 13M14 18.5L20 24L26 18.5" fill="none" stroke="#7d808b" stroke-width="2"/></svg>
<svg style="position:absolute;left:3341px;top:351px;" width="40" height="38" viewBox="0 0 40 38"><path d="M19.5 11V27M11.5 19H27.5" stroke="#7d808b" stroke-width="4"/></svg>
<div style="position:absolute;left:3373px;top:359.02px;font-family:'Liberation Sans', sans-serif;font-size:21px;line-height:21px;color:#6f727d;font-weight:normal;font-style:normal;white-space:nowrap;">Page</div>
<div style="position:absolute;left:2539px;top:413.97px;font-family:'Liberation Sans', sans-serif;font-size:21.3px;line-height:21.3px;color:#9b9da6;font-weight:normal;font-style:italic;white-space:nowrap;">Here you can re-order and move your widgets, groups and pages.</div>
<div style="position:absolute;left:2538px;top:458px;width:894px;height:464px;box-sizing:border-box;border:2px solid #b6b7c1;border-top:3px solid #b6b7c1;border-radius:8px;background:#fff;"></div>
<div style="position:absolute;left:2540px;top:538px;width:890px;height:2px;background:#b6b7c1;"></div>
<svg style="position:absolute;left:2589px;top:496px;" width="16" height="11" viewBox="0 0 16 11"><path d="M1.5 1.5L8 8.5L14.5 1.5" fill="none" stroke="#2b2d33" stroke-width="2.2"/></svg>
<svg style="position:absolute;left:2618px;top:486px;" width="32" height="28" viewBox="0 0 32 28"><rect x="2.5" y="2.5" width="27" height="23" fill="none" stroke="#2b2d33" stroke-width="1.8"/><rect x="0.5" y="0.5" width="4.5" height="4.5" fill="#fff" stroke="#2b2d33" stroke-width="1.4"/><rect x="27" y="0.5" width="4.5" height="4.5" fill="#fff" stroke="#2b2d33" stroke-width="1.4"/><rect x="0.5" y="23" width="4.5" height="4.5" fill="#fff" stroke="#2b2d33" stroke-width="1.4"/><rect x="27" y="23" width="4.5" height="4.5" fill="#fff" stroke="#2b2d33" stroke-width="1.4"/><rect x="12.9" y="11.4" width="12.1" height="9.2" fill="#fff" stroke="#2b2d33" stroke-width="1.8"/><rect x="8.2" y="7.3" width="10.6" height="8.5" fill="#fff" stroke="#2b2d33" stroke-width="1.8"/></svg>
<div style="position:absolute;left:2662px;top:486.29px;font-family:'Liberation Sans', sans-serif;font-size:28px;line-height:28px;color:#2b2d33;font-weight:normal;font-style:normal;white-space:nowrap;">Page 1</div>
<div style="position:absolute;left:2761px;top:489.68px;font-family:'Liberation Sans', sans-serif;font-size:24px;line-height:24px;color:#8e919c;font-weight:normal;font-style:normal;white-space:nowrap;">2 Groups</div>
<div style="position:absolute;left:3303px;top:480px;width:43px;height:39px;box-sizing:border-box;border:2px solid #c8c9d1;border-radius:5px;background:#fff;"></div>
<div style="position:absolute;left:3355px;top:480px;width:43px;height:39px;box-sizing:border-box;border:2px solid #c8c9d1;border-radius:5px;background:#fff;"></div>
<svg style="position:absolute;left:3303px;top:480px;" width="43" height="39" viewBox="0 0 43 39"><path d="M12.5 20C16 14.5 28 14.5 31.5 20C28 25.5 16 25.5 12.5 20Z" fill="none" stroke="#7d808b" stroke-width="1.8"/><circle cx="22.5" cy="19" r="4" fill="#7d808b"/></svg>
<svg style="position:absolute;left:3355px;top:480px;" width="43" height="39" viewBox="0 0 43 39"><rect x="12" y="18.5" width="13" height="9.5" fill="#7d808b"/><path d="M22 18.5V14A4 4 0 0 1 30 14V17" fill="none" stroke="#7d808b" stroke-width="2.2"/></svg>
<svg style="position:absolute;left:2637px;top:574px;" width="16" height="11" viewBox="0 0 16 11"><path d="M1.5 1.5L8 8.5L14.5 1.5" fill="none" stroke="#2b2d33" stroke-width="2.2"/></svg>
<svg style="position:absolute;left:2666px;top:566px;" width="26" height="22" viewBox="0 0 26 22"><rect x="1" y="1.2" width="24" height="20" rx="2" fill="none" stroke="#2b2d33" stroke-width="2"/><rect x="1" y="0.5" width="24" height="3.8" rx="1.5" fill="#2b2d33"/><path d="M1 8.8H25M1 15.4H25M9.5 3V21M17.5 3V21" stroke="#2b2d33" stroke-width="1.8"/></svg>
<div style="position:absolute;left:2704px;top:563.99px;font-family:'Liberation Sans', sans-serif;font-size:28px;line-height:28px;color:#2b2d33;font-weight:normal;font-style:normal;white-space:nowrap;">Controls</div>
<div style="position:absolute;left:2821px;top:567.38px;font-family:'Liberation Sans', sans-serif;font-size:24px;line-height:24px;color:#8e919c;font-weight:normal;font-style:normal;white-space:nowrap;">2 Widgets</div>
<div style="position:absolute;left:3303px;top:558px;width:43px;height:39px;box-sizing:border-box;border:2px solid #c8c9d1;border-radius:5px;background:#fff;"></div>
<div style="position:absolute;left:3355px;top:558px;width:43px;height:39px;box-sizing:border-box;border:2px solid #c8c9d1;border-radius:5px;background:#fff;"></div>
<svg style="position:absolute;left:3303px;top:558px;" width="43" height="39" viewBox="0 0 43 39"><path d="M12.5 20C16 14.5 28 14.5 31.5 20C28 25.5 16 25.5 12.5 20Z" fill="none" stroke="#7d808b" stroke-width="1.8"/><circle cx="22.5" cy="19" r="4" fill="#7d808b"/></svg>
<svg style="position:absolute;left:3355px;top:558px;" width="43" height="39" viewBox="0 0 43 39"><rect x="12" y="18.5" width="13" height="9.5" fill="#7d808b"/><path d="M22 18.5V14A4 4 0 0 1 30 14V17" fill="none" stroke="#7d808b" stroke-width="2.2"/></svg>
<svg style="position:absolute;left:2700px;top:642px;" width="30" height="24" viewBox="0 0 30 24"><rect x="1" y="1" width="28" height="22" rx="2" fill="none" stroke="#2b2d33" stroke-width="2"/><circle cx="7.5" cy="7" r="2.5" fill="#2b2d33"/><path d="M4 19.5V17L9 12.5L12 15L19 8L26 14.5V19.5Z" fill="#2b2d33"/></svg>
<div style="position:absolute;left:2742px;top:639.79px;font-family:'Liberation Sans', sans-serif;font-size:28px;line-height:28px;color:#2b2d33;font-weight:normal;font-style:normal;white-space:nowrap;">button</div>
<svg style="position:absolute;left:2700px;top:718px;" width="30" height="24" viewBox="0 0 30 24"><rect x="1" y="1" width="28" height="22" rx="2" fill="none" stroke="#2b2d33" stroke-width="2"/><circle cx="7.5" cy="7" r="2.5" fill="#2b2d33"/><path d="M4 19.5V17L9 12.5L12 15L19 8L26 14.5V19.5Z" fill="#2b2d33"/></svg>
<div style="position:absolute;left:2742px;top:715.89px;font-family:'Liberation Sans', sans-serif;font-size:28px;line-height:28px;color:#2b2d33;font-weight:normal;font-style:normal;white-space:nowrap;">slider</div>
<svg style="position:absolute;left:2637px;top:802px;" width="16" height="11" viewBox="0 0 16 11"><path d="M1.5 1.5L8 8.5L14.5 1.5" fill="none" stroke="#2b2d33" stroke-width="2.2"/></svg>
<svg style="position:absolute;left:2666px;top:794px;" width="26" height="22" viewBox="0 0 26 22"><rect x="1" y="1.2" width="24" height="20" rx="2" fill="none" stroke="#2b2d33" stroke-width="2"/><rect x="1" y="0.5" width="24" height="3.8" rx="1.5" fill="#2b2d33"/><path d="M1 8.8H25M1 15.4H25M9.5 3V21M17.5 3V21" stroke="#2b2d33" stroke-width="1.8"/></svg>
<div style="position:absolute;left:2704px;top:791.59px;font-family:'Liberation Sans', sans-serif;font-size:28px;line-height:28px;color:#2b2d33;font-weight:normal;font-style:normal;white-space:nowrap;">Data Visualization</div>
<div style="position:absolute;left:2938px;top:794.98px;font-family:'Liberation Sans', sans-serif;font-size:24px;line-height:24px;color:#8e919c;font-weight:normal;font-style:normal;white-space:nowrap;">1 Widgets</div>
<div style="position:absolute;left:3303px;top:786px;width:43px;height:39px;box-sizing:border-box;border:2px solid #c8c9d1;border-radius:5px;background:#fff;"></div>
<div style="position:absolute;left:3355px;top:786px;width:43px;height:39px;box-sizing:border-box;border:2px solid #c8c9d1;border-radius:5px;background:#fff;"></div>
<svg style="position:absolute;left:3303px;top:786px;" width="43" height="39" viewBox="0 0 43 39"><path d="M12.5 20C16 14.5 28 14.5 31.5 20C28 25.5 16 25.5 12.5 20Z" fill="none" stroke="#7d808b" stroke-width="1.8"/><circle cx="22.5" cy="19" r="4" fill="#7d808b"/></svg>
<svg style="position:absolute;left:3355px;top:786px;" width="43" height="39" viewBox="0 0 43 39"><rect x="12" y="18.5" width="13" height="9.5" fill="#7d808b"/><path d="M22 18.5V14A4 4 0 0 1 30 14V17" fill="none" stroke="#7d808b" stroke-width="2.2"/></svg>
<svg style="position:absolute;left:2700px;top:870px;" width="30" height="24" viewBox="0 0 30 24"><rect x="1" y="1" width="28" height="22" rx="2" fill="none" stroke="#2b2d33" stroke-width="2"/><circle cx="7.5" cy="7" r="2.5" fill="#2b2d33"/><path d="M4 19.5V17L9 12.5L12 15L19 8L26 14.5V19.5Z" fill="#2b2d33"/></svg>
<div style="position:absolute;left:2742px;top:868.09px;font-family:'Liberation Sans', sans-serif;font-size:28px;line-height:28px;color:#2b2d33;font-weight:normal;font-style:normal;white-space:nowrap;">chart</div>
<div style="position:absolute;left:2516px;top:1928px;width:938px;height:2px;background:#b6b7c1;"></div>
<div style="position:absolute;left:2516px;top:1930px;width:938px;height:50px;background:#f3f3fb;"></div>
</div></body></html>
